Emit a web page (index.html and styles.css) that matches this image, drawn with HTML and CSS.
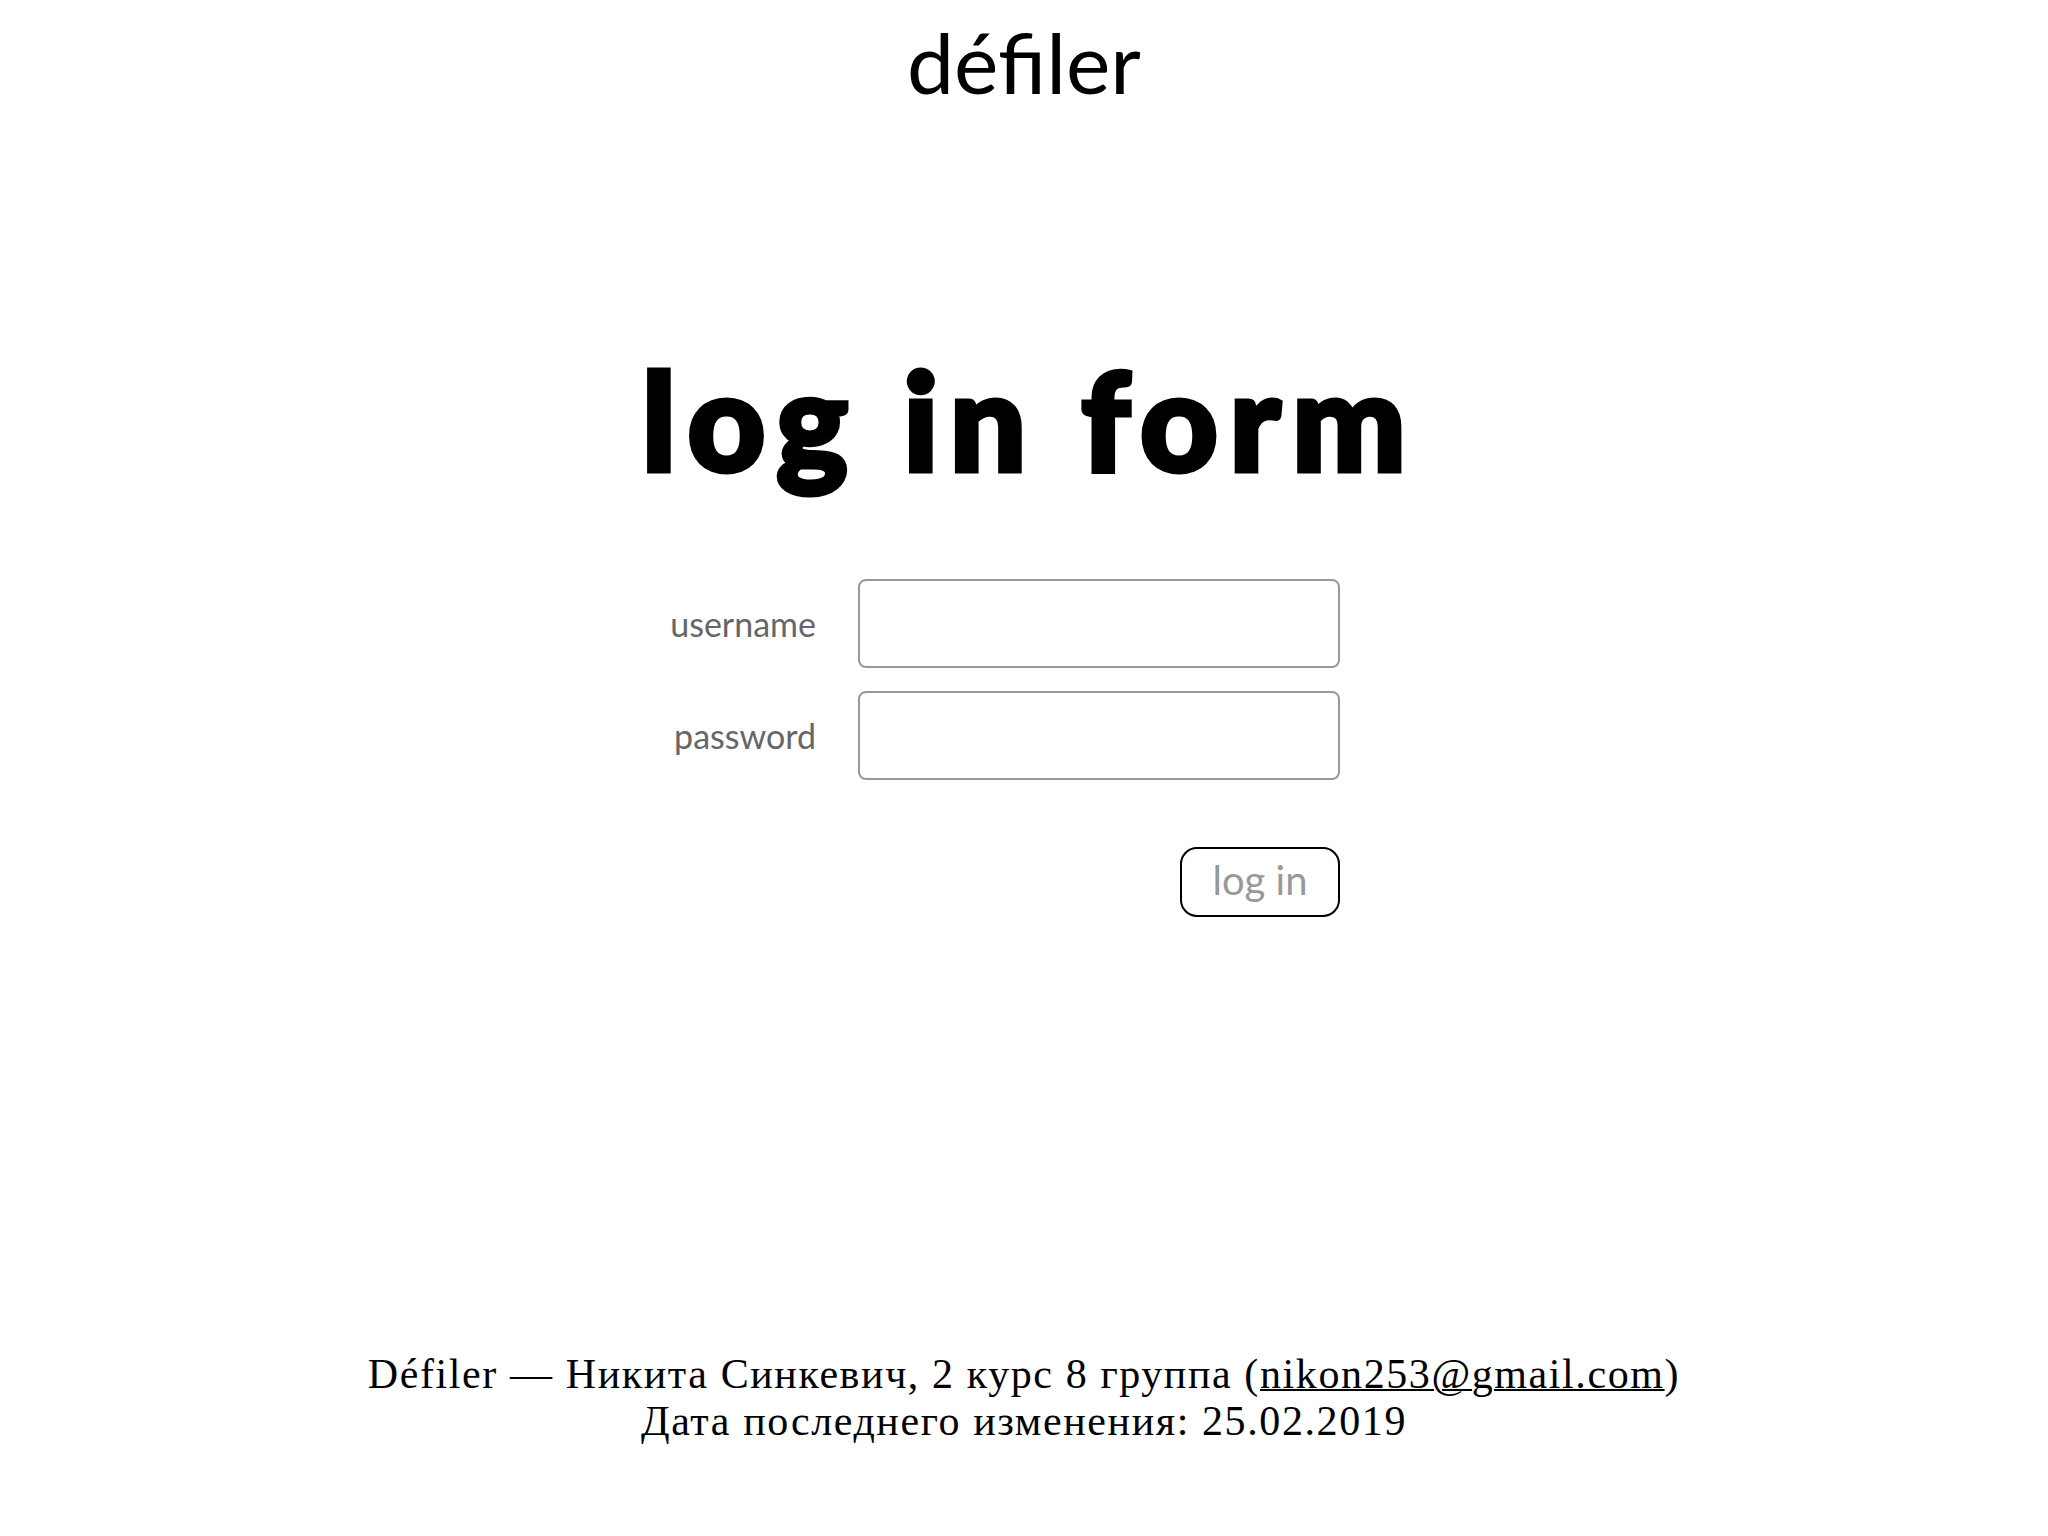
FILE: index.html
```html
<!DOCTYPE html>
<html lang="ru">
<head>
<meta charset="utf-8">
<title>défiler — log in</title>
<link rel="stylesheet" href="styles.css">
</head>
<body>
<header class="brand">défiler</header>
<main class="main">
  <h1 class="title">log in form</h1>
  <form class="form">
    <label class="label" for="username">username</label>
    <input class="field" id="username" type="text">
    <label class="label" for="password">password</label>
    <input class="field" id="password" type="password">
    <div class="actions">
      <button class="btn" type="button">log in</button>
    </div>
  </form>
</main>
<footer class="footer">
  <div>Défiler — Никита Синкевич, 2 курс 8 группа (<a class="mail" href="#">nikon253@gmail.com</a>)</div>
  <div>Дата последнего изменения: 25.02.2019</div>
</footer>
</body>
</html>
```
FILE: styles.css
```css
html, body {
  margin: 0;
  padding: 0;
  background: #fff;
}
body {
  min-height: 100vh;
  display: flex;
  flex-direction: column;
  font-family: "Lato", "Noto Sans", sans-serif;
  color: #000;
}
.brand {
  padding-top: 20px;
  font-size: 84px;
  line-height: 84px;
  text-align: center;
}
.main {
  display: flex;
  flex-direction: column;
  align-items: center;
}
.title {
  margin: 247px 0 0 0;
  padding-left: 11px;
  font-size: 135px;
  line-height: 136px;
  font-weight: 900;
  letter-spacing: 11.5px;
  -webkit-text-stroke: 5px #000;
  text-align: center;
}
.form {
  margin-top: 92px;
  margin-right: 90px;
  display: grid;
  grid-template-columns: 200px 482px;
  column-gap: 40px;
  row-gap: 23px;
  align-items: center;
}
.label {
  justify-self: end;
  font-size: 34px;
  color: #666;
  padding-top: 0;
  padding-right: 2px;
}
.field {
  box-sizing: border-box;
  width: 482px;
  height: 89px;
  margin: 0;
  border: 2px solid #999;
  border-radius: 8px;
  font-size: 30px;
  font-family: inherit;
  padding: 0 14px;
  outline: none;
}
.actions {
  grid-column: 2;
  display: flex;
  justify-content: flex-end;
  margin-top: 44px;
}
.btn {
  box-sizing: border-box;
  width: 160px;
  height: 70px;
  border: 2px solid #000;
  border-radius: 17px;
  background: #fff;
  color: #999;
  font-family: "Lato", sans-serif;
  font-size: 40px;
  padding: 0 0 4px 0;
}
.footer {
  margin-top: auto;
  padding-bottom: 91px;
  font-family: "Liberation Serif", serif;
  font-size: 42px;
  line-height: 47px;
  text-align: center;
  letter-spacing: 1.6px;
}
.mail {
  color: #000;
  text-decoration: underline;
  text-decoration-thickness: 2px;
}
```
